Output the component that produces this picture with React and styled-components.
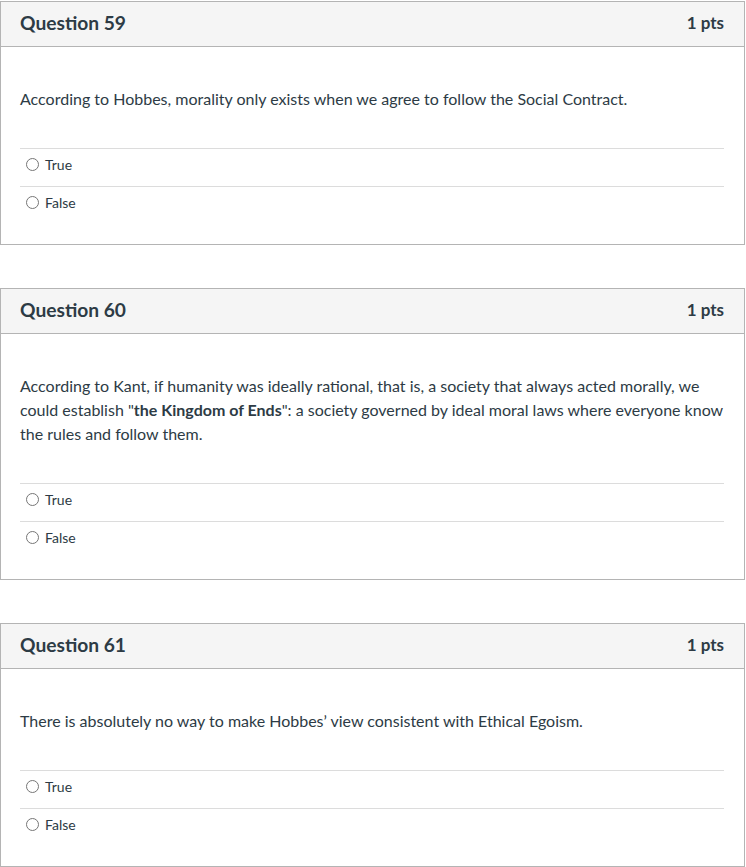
import React from 'react';
import styled, { createGlobalStyle } from 'styled-components';

const questions = [
  {
    id: 59,
    points: 1,
    text: <>According to Hobbes, morality only exists when we agree to follow the Social Contract.</>,
  },
  {
    id: 60,
    points: 1,
    text: (
      <>
        According to Kant, if humanity was ideally rational, that is, a society that always acted morally, we
        could establish "<strong>the Kingdom of Ends</strong>": a society governed by ideal moral laws where everyone know
        the rules and follow them.
      </>
    ),
  },
  {
    id: 61,
    points: 1,
    text: <>There is absolutely no way to make Hobbes’ view consistent with Ethical Egoism.</>,
  },
];

const answers = ['True', 'False'];

function App() {
  return (
    <>
      <GlobalStyle />
      <StPage>
        {questions.map((q) => (
          <StCard key={q.id}>
            <StHeader>
              <StTitle>Question {q.id}</StTitle>
              <StPoints>{q.points} pts</StPoints>
            </StHeader>
            <StBody>
              <StText>{q.text}</StText>
              <StAnswerList>
                {answers.map((a) => (
                  <StAnswer key={a}>
                    <StRadio />
                    <StLabel>{a}</StLabel>
                  </StAnswer>
                ))}
              </StAnswerList>
            </StBody>
          </StCard>
        ))}
      </StPage>
    </>
  );
}

export default App;

const GlobalStyle = createGlobalStyle`
  body {
    margin: 0;
    background: #ffffff;
    font-family: Lato, "Liberation Sans", sans-serif;
    color: #2d3b45;
  }
`;

const StPage = styled.div`
  display: flex;
  flex-direction: column;
  gap: 43px;
  padding-top: 1px;
`;

const StCard = styled.div`
  width: 745px;
  box-sizing: border-box;
  border: 1px solid #b4b4b4;
  background: #ffffff;
`;

const StHeader = styled.div`
  display: flex;
  align-items: center;
  justify-content: space-between;
  height: 41px;
  padding: 0 20px 3px 19px;
  background: #f5f5f5;
  border-bottom: 1px solid #b4b4b4;
`;

const StTitle = styled.h2`
  margin: 0;
  font-size: 19.2px;
  font-weight: 700;
  color: #2d3b45;
`;

const StPoints = styled.div`
  font-size: 17px;
  font-weight: 700;
  color: #2d3b45;
`;

const StBody = styled.div`
  padding: 40px 20px 20px 19px;
`;

const StText = styled.div`
  font-size: 16px;
  line-height: 24px;
  color: #2d3b45;

  strong {
    font-weight: 700;
  }
`;

const StAnswerList = styled.div`
  margin-top: 37px;
`;

const StAnswer = styled.div`
  display: flex;
  align-items: center;
  box-sizing: border-box;
  height: 38px;
  padding-bottom: 6px;
  border-top: 1px solid #dcdcdc;
`;

const StRadio = styled.span`
  box-sizing: border-box;
  width: 13px;
  height: 13px;
  margin-left: 6px;
  border: 1px solid #767676;
  border-radius: 50%;
  background: #ffffff;
`;

const StLabel = styled.span`
  margin-left: 6px;
  font-size: 14px;
  color: #2d3b45;
`;
